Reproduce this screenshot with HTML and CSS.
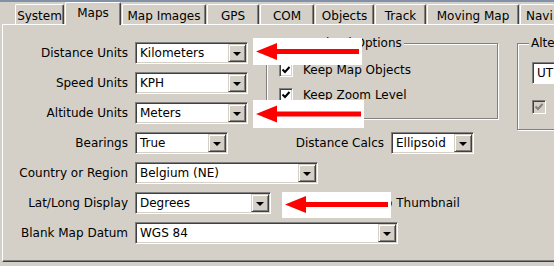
FILE: index.html
```html
<!DOCTYPE html>
<html lang="en">
<head>
  <meta charset="UTF-8" />
  <meta name="viewport" content="width=device-width,initial-scale=1" />
  <title>Options – Maps</title>
  <link rel="stylesheet" href="styles.css">
</head>
<body>

  <div class="topline"></div>

  <!-- tab strip -->
  <div class="tabs">
    <div class="tab t-system">System</div>
    <div class="tab tab-on t-maps">Maps</div>
    <div class="tab t-images">Map Images</div>
    <div class="tab t-gps">GPS</div>
    <div class="tab t-com">COM</div>
    <div class="tab t-objects">Objects</div>
    <div class="tab t-track">Track</div>
    <div class="tab t-moving">Moving Map</div>
    <div class="tab t-navi">Navi</div>
  </div>

  <div class="panel">
    <div class="top">
      <!-- units -->
      <div class="rows">
        <div class="row">
          <span class="lbl">Distance Units</span>
          <div class="combo w-units"><span class="val">Kilometers</span><span class="drop"></span></div>
        </div>
        <div class="row">
          <span class="lbl">Speed Units</span>
          <div class="combo w-units"><span class="val">KPH</span><span class="drop"></span></div>
        </div>
        <div class="row">
          <span class="lbl">Altitude Units</span>
          <div class="combo w-units"><span class="val">Meters</span><span class="drop"></span></div>
        </div>
      </div>

      <!-- group boxes -->
      <div class="group g-load">
        <div class="group-title">Download Options</div>
        <div class="check-row first">
          <span class="chk"><svg width="10" height="10" viewBox="0 0 10 10"><path d="M1.5 4.5 L4 7 L8.5 2" fill="none" stroke="#000" stroke-width="2"/></svg></span>
          Keep Map Objects
        </div>
        <div class="check-row">
          <span class="chk"><svg width="10" height="10" viewBox="0 0 10 10"><path d="M1.5 4.5 L4 7 L8.5 2" fill="none" stroke="#000" stroke-width="2"/></svg></span>
          Keep Zoom Level
        </div>
      </div>

      <div class="group g-alt">
        <div class="group-title">Alte</div>
        <div class="combo w-alt"><span class="val">UT</span></div>
        <div class="check-row alt-check">
          <span class="chk chk-off"><svg width="10" height="10" viewBox="0 0 10 10"><path d="M1.5 4.5 L4 7 L8.5 2" fill="none" stroke="#808080" stroke-width="2"/></svg></span>
        </div>
      </div>
    </div>

    <div class="rows rows-low">
      <div class="row">
        <span class="lbl">Bearings</span>
        <div class="combo w-bear"><span class="val">True</span><span class="drop"></span></div>
        <span class="lbl lbl-calc">Distance Calcs</span>
        <div class="combo w-calc"><span class="val">Ellipsoid</span><span class="drop"></span></div>
      </div>
      <div class="row">
        <span class="lbl">Country or Region</span>
        <div class="combo w-country"><span class="val">Belgium (NE)</span><span class="drop"></span></div>
      </div>
      <div class="row">
        <span class="lbl">Lat/Long Display</span>
        <div class="combo w-latlong"><span class="val">Degrees</span><span class="drop"></span></div>
        <span class="chk chk-thumb"></span>
        <span class="thumb-text">Zoom to Thumbnail</span>
      </div>
      <div class="row">
        <span class="lbl">Blank Map Datum</span>
        <div class="combo w-datum"><span class="val">WGS 84</span><span class="drop"></span></div>
      </div>
    </div>
  </div>

  <!-- red annotation arrows pasted over the dialog -->
  <div class="arrow a1">
    <svg width="109" height="27" viewBox="0 0 109 27"><polygon points="3,13.5 24,5 24,11 106,11 106,16 24,16 24,22" fill="#f00"/></svg>
  </div>
  <div class="arrow a2">
    <svg width="111" height="28" viewBox="0 0 111 28"><polygon points="3,14 24,5.5 24,11.5 108,11.5 108,16.5 24,16.5 24,22.5" fill="#f00"/></svg>
  </div>
  <div class="arrow a3">
    <svg width="109" height="26" viewBox="0 0 109 26"><polygon points="3,12.5 24,4 24,10 106,10 106,15 24,15 24,21" fill="#f00"/></svg>
  </div>

</body>
</html>
```

FILE: styles.css
```css
*{box-sizing:border-box;margin:0;padding:0}
body{font-family:"DejaVu Sans",Verdana,sans-serif;font-size:12px;line-height:14px;color:#000;
     background:#d4d0c8;width:554px;height:266px;overflow:hidden;position:relative}

.topline{height:2px;background:#8391a8}

/* tabs */
.tabs{display:flex;align-items:flex-end;height:22px;padding-left:15px;white-space:nowrap}
.tab{height:20px;margin-right:1px;padding-top:4px;text-align:center;background:#d4d0c8;
     border-top:1px solid #fff;border-left:1px solid #fff;border-right:1px solid #404040;
     border-radius:2px 2px 0 0;box-shadow:inset -1px 0 #808080;flex:none;overflow:hidden}
.tab-on{height:23px;padding-top:3px;margin-bottom:-1px;position:relative;z-index:1}
.t-system{width:49px}.t-maps{width:56px}.t-images{width:84px}.t-gps{width:52px}
.t-com{width:54px}.t-objects{width:59px}.t-track{width:51px}.t-moving{width:92px}
.t-navi{width:34px;text-align:left;padding-left:5px;border-right:none;box-shadow:none}

/* page panel */
.panel{height:238px;margin-left:2px;border-top:1px solid #fff;border-left:1px solid #fff;
       border-bottom:1px solid #404040;box-shadow:inset 0 -1px #808080;overflow:hidden}
.top{display:flex;align-items:flex-start;padding-top:17px}
.rows{display:flex;flex-direction:column;gap:8px}
.rows-low{margin-top:2px}
.row{display:flex;align-items:center;height:22px;white-space:nowrap}
.lbl{width:125px;margin-right:7px;text-align:right;flex:none}
.lbl-calc{width:156px}

/* combo box */
.combo{display:flex;height:22px;flex:none;background:#fff;padding:1px;
       border:1px solid;border-color:#808080 #fff #fff #808080;
       box-shadow:inset 1px 1px #404040,inset -1px -1px #d4d0c8}
.combo .val{flex:1;padding-left:3px;line-height:18px;overflow:hidden;white-space:nowrap}
.combo .drop{width:18px;flex:none;display:flex;align-items:center;justify-content:center;
             background:#d4d0c8;border:1px solid;border-color:#d4d0c8 #404040 #404040 #d4d0c8;
             box-shadow:inset 1px 1px #fff,inset -1px -1px #808080}
.combo .drop::after{content:"";border-left:4px solid transparent;border-right:4px solid transparent;
                    border-top:4px solid #000;margin-top:1px}
.w-units{width:113px}.w-bear{width:93px}.w-calc{width:83px}.w-country{width:183px}
.w-latlong{width:136px}.w-datum{width:263px}.w-alt{width:24px;border-right:none;box-shadow:inset 1px 1px #404040}

/* group boxes */
.group{border:1px solid #808080;box-shadow:inset 1px 1px #fff,1px 1px #fff;flex:none}
.group-title{width:fit-content;margin:-8px 0 0 11px;padding:0 2px;background:#d4d0c8;white-space:nowrap}
.g-load{width:232px;height:76px;margin:1px 0 0 18px;padding-left:12px}
.g-alt{width:39px;height:87px;margin:1px 0 0 19px;padding-left:14px;border-right:none}
.g-alt .group-title{margin-left:-3px}
.g-alt .combo{margin-top:12px}

.check-row{display:flex;align-items:center;height:16px;margin-top:9px;white-space:nowrap}
.check-row.first{margin-top:12px}
.alt-check{margin-top:15px}
.chk{width:14px;height:14px;flex:none;margin-right:10px;display:flex;align-items:center;justify-content:center;
     background:#fff;border:1px solid;border-color:#808080 #fff #fff #808080;
     box-shadow:inset 1px 1px #404040,inset -1px -1px #d4d0c8}
.chk-off{background:#d4d0c8}
.chk-thumb{margin-left:49px;margin-right:8px}

/* annotation arrows */
.arrow{position:absolute;background:#fff;z-index:2}
.arrow svg{display:block}
.a1{left:253px;top:38px}
.a2{left:253px;top:100px}
.a3{left:282px;top:192px}
```
